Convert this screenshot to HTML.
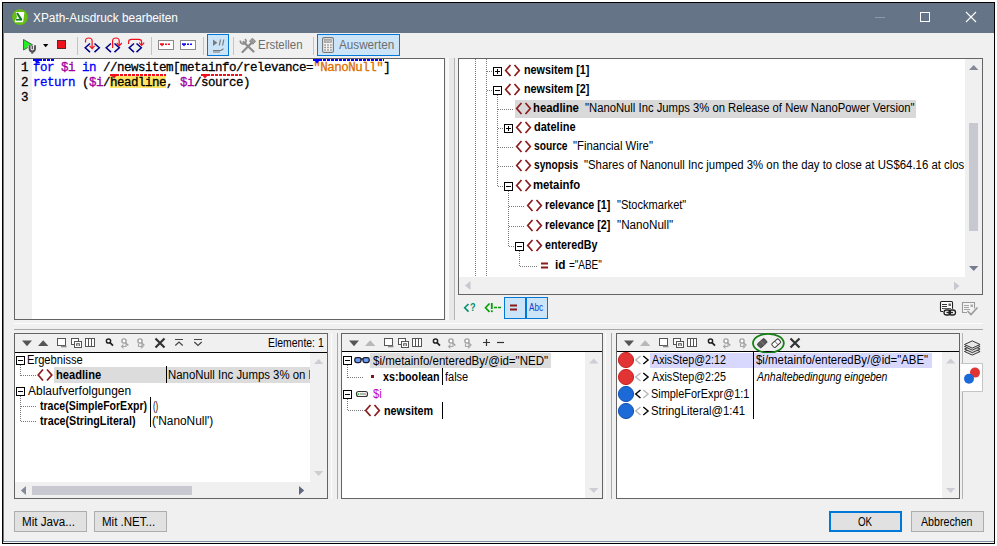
<!DOCTYPE html>
<html><head><meta charset="utf-8"><title>XPath-Ausdruck bearbeiten</title>
<style>
*{box-sizing:border-box;margin:0;padding:0}
html,body{width:997px;height:546px;background:#fff;overflow:hidden}
body{font-family:"Liberation Sans",sans-serif;font-size:12px;color:#000;position:relative}
.a{position:absolute}
.t{position:absolute;white-space:nowrap;line-height:14px;height:14px}
.b{font-weight:bold}
.i{font-style:italic}
.t{transform-origin:0 50%}
#win{left:2px;top:2px;width:993px;height:542px;background:#f0f0f0;border:1px solid #000}
#title{left:3px;top:3px;width:991px;height:30px;background:#667488}
.box{position:absolute;background:#fff;border:1px solid #646464}
.sep{position:absolute;width:1px;background:#c4c4c4;top:37px;height:18px}
.mono{-webkit-text-stroke:0.3px;font-family:"Liberation Mono",monospace;font-size:12.5px;letter-spacing:-0.5px;white-space:pre;position:absolute;line-height:15px;height:15px}
.btn{position:absolute;background:#e1e1e1;border:1px solid #adadad;text-align:center;line-height:19px;height:21px}
svg{position:absolute;overflow:visible}
</style></head><body>
<div id="win" class="a"></div>
<div id="title" class="a"></div>
<!--TITLE-->
<svg class="a" style="left:12px;top:9px" width="16" height="16" viewBox="0 0 16 16"><circle cx="8" cy="8.100" r="7.900" fill="#64c00c"/><path d="M3.700 3h8q.8 0 .6 1l-1 8q-.2 1.200-1.200 1.200H3.400q-.8 0-.5-1l.6-1.800 1.600-2.400z" fill="#fff"/><path d="M5 4l4.300 6.600" stroke="#0a7a1a" stroke-width="2" fill="none"/><path d="M3.900 10.700h6.200" stroke="#0a7a1a" stroke-width="1.700" fill="none"/></svg>
<div class="a" style="left:875px;top:17px;width:10px;height:1px;background:#8e99a9"></div>
<div class="a" style="left:920px;top:12px;width:10px;height:10px;border:1px solid #fff"></div>
<svg class="a" style="left:966px;top:12px" width="10" height="10" viewBox="0 0 10 10"><path d="M0 0L10 10M10 0L0 10" stroke="#fff" stroke-width="1.1" fill="none"/></svg>
<!--TOOLBAR-->
<svg style="left:0;top:0" width="420" height="60" viewBox="0 0 420 60">
<!-- run -->
<path d="M23.500 39.500v10.500l9-5.250z" fill="#22ee22" stroke="#4a6a4a" stroke-width="1"/>
<path d="M29.600 45.500v3.200a2.700 2.700 0 0 0 5.400 0v-3.200" fill="none" stroke="#f0f0f0" stroke-width="3.600"/><path d="M29.600 45.300v3.400a2.700 2.700 0 0 0 5.400 0v-3.400" fill="none" stroke="#505050" stroke-width="1.900"/><path d="M32.300 51v2.600" stroke="#505050" stroke-width="2.200"/><path d="M32.300 45.800v3.400" stroke="#505050" stroke-width="1.300"/>
<path d="M43 44h5.4l-2.7 3.2z" fill="#000"/>
<rect x="57.5" y="40.5" width="8" height="8" fill="#f0101c" stroke="#5a2a2a" stroke-width="1"/>
<!-- step into -->
<g fill="none" stroke="#000088" stroke-width="1.5"><path d="M90 43.5l-4.8 4.3 4.8 4.3"/><path d="M94.5 43.5l4.8 4.3-4.8 4.3"/></g>
<path d="M85.500 42.500v-1.500q0-3 3.300-3t3.300 3v7" fill="none" stroke="#f0101c" stroke-width="1.200"/><path d="M89.6 45.800l2.500 2.800 2.500-2.800" fill="none" stroke="#f0101c" stroke-width="1.200"/>
<!-- step out -->
<g fill="none" stroke="#000088" stroke-width="1.5"><path d="M111 43.500l-4.800 4.300 4.800 4.300"/><path d="M114.500 43.500l4.800 4.300-4.800 4.300"/></g>
<path d="M112.600 48v-7q0-3 3.300-3t3.300 3v4" fill="none" stroke="#f0101c" stroke-width="1.200"/><path d="M116.800 43l2.500 2.800 2.500-2.800" fill="none" stroke="#f0101c" stroke-width="1.200"/>
<!-- step over -->
<g fill="none" stroke="#000088" stroke-width="1.5"><path d="M134 43.500l-4.800 4.300 4.800 4.300"/><path d="M136.500 43.500l4.800 4.300-4.800 4.300"/></g>
<path d="M128.600 44v-2q0-2.600 3-2.600h7q3 0 3 2.600v3" fill="none" stroke="#f0101c" stroke-width="1.200"/><path d="M139 42.600l2.600 2.800 2.600-2.800" fill="none" stroke="#f0101c" stroke-width="1.200"/>
<!-- breakpoints -->
<rect x="158.500" y="40.500" width="15" height="9" fill="#fff" stroke="#8c8c8c"/>
<path d="M159.800 43.600h4.400l-2.200 3z" fill="#f0101c"/><path d="M160 44.300h11" stroke="#f0101c" stroke-width="1.400" stroke-dasharray="4 1 2 1 2 1"/>
<rect x="180.500" y="40.500" width="15" height="9" fill="#fff" stroke="#8c8c8c"/>
<path d="M181.800 43.600h4.400l-2.200 3z" fill="#1010f0"/><path d="M182 44.300h11" stroke="#1010f0" stroke-width="1.400" stroke-dasharray="4 1 2 1 2 1"/>
<!-- toggle btn -->
<rect x="207.500" y="34.500" width="21" height="21" fill="#cce4f7" stroke="#0078d7"/>
<path d="M213 39.500v6.500l4.400-3.250z" fill="#7a7a7a"/><path d="M220.500 39.500l-1.200 6M223.800 39.500l-1.200 6" stroke="#7a7a7a" stroke-width="1.200"/>
<path d="M213 50.500h8l2.500-1.800" fill="none" stroke="#7a7a7a" stroke-width="1.200"/><path d="M213 52h7" stroke="#7a7a7a" stroke-width="1"/>
<!-- tools -->
<g stroke="#8a8a8a" stroke-width="2.200" fill="none" stroke-linecap="round"><path d="M243.500 42l10 9.500"/><path d="M252 42.500l-9.500 9.500"/></g>
<path d="M240.500 40.500a2.800 2.800 0 1 0 4.500 -1.500" fill="none" stroke="#8a8a8a" stroke-width="1.600"/>
<path d="M249.500 41l3-2.800 3.200 3.200-3 2.800z" fill="#9a9a9a" stroke="#7a7a7a" stroke-width=".8"/>
<!-- eval btn -->
<rect x="317.500" y="34.500" width="82" height="21" fill="#cce4f7" stroke="#0078d7"/>
<rect x="322.600" y="37.600" width="10.800" height="14.800" rx="1.500" fill="#f4f4f4" stroke="#7a7a7a" stroke-width="1.200"/>
<rect x="324.500" y="39.500" width="7" height="3" fill="#b8b8b8" stroke="#8a8a8a" stroke-width=".6"/>
<g fill="#8a8a8a"><rect x="324.300" y="44.300" width="1.600" height="1.400"/><rect x="327.200" y="44.300" width="1.600" height="1.400"/><rect x="330.100" y="44.300" width="1.600" height="1.400"/><rect x="324.300" y="46.800" width="1.600" height="1.400"/><rect x="327.200" y="46.800" width="1.600" height="1.400"/><rect x="330.100" y="46.800" width="1.600" height="1.400"/><rect x="324.300" y="49.300" width="1.600" height="1.400"/><rect x="327.200" y="49.300" width="1.600" height="1.400"/><rect x="330.100" y="49.300" width="1.600" height="1.400"/></g>
</svg>
<div class="sep" style="left:77px"></div><div class="sep" style="left:151px"></div><div class="sep" style="left:203px"></div><div class="sep" style="left:233px"></div><div class="sep" style="left:313px"></div>
<!--EDITOR-->
<div class="box" style="left:14px;top:58px;width:431px;height:262px"></div>
<div class="a" style="left:15px;top:59px;width:17px;height:260px;background:#f0f0f0"></div>
<div class="a" style="left:110px;top:76px;width:56px;height:12px;background:#ffe566"></div>
<div class="mono" style="left:21px;top:61px">1</div><div class="mono" style="left:33px;top:61px"><span style="color:#0000ff">for</span> <span style="color:#a000a0">$i</span> <span style="color:#0000ff">in</span> //newsitem[metainfo/relevance=<span style="color:#dc7000">"NanoNull"</span>]</div>
<div class="mono" style="left:21px;top:76px">2</div><div class="mono" style="left:33px;top:76px"><span style="color:#0000ff">return</span> (<span style="color:#a000a0">$i</span>/headline, <span style="color:#a000a0">$i</span>/source)</div>
<div class="mono" style="left:21px;top:91px">3</div>
<svg style="left:0;top:0" width="450" height="100" viewBox="0 0 450 100">
<path d="M33 59h8l-4 4.500z" fill="#0000ff"/><path d="M33 60h22" stroke="#0000ff" stroke-width="2" shape-rendering="crispEdges" stroke-dasharray="9 1 3 1 3 1 3 1"/>
<path d="M313 59h8l-4 4.500z" fill="#0000ff"/><path d="M313 60h71" stroke="#0000ff" stroke-width="2" shape-rendering="crispEdges" stroke-dasharray="9 1 3 1 3 1 3 1 3 1 3 1 3 1 3 1 3 1 3 1 3 1 3 1 3 1 3 1 3 1 3 1"/>
<path d="M110 74h8l-4 4.500z" fill="#f0101c"/><path d="M110 75h56" stroke="#f0101c" stroke-width="2" shape-rendering="crispEdges" stroke-dasharray="9 1 3 1 3 1 3 1 3 1 3 1 3 1 3 1 3 1 3 1 3 1 3 1 3 1 3 1"/>
<path d="M201 74h8l-4 4.500z" fill="#f0101c"/><path d="M201 75h42" stroke="#f0101c" stroke-width="2" shape-rendering="crispEdges" stroke-dasharray="9 1 3 1 3 1 3 1 3 1 3 1 3 1 3 1 3 1 3 1 3 1"/>
</svg>
<!-- splitter -->
<div class="a" style="left:446px;top:58px;width:3px;height:262px;background:#f8f8f8"></div>
<div class="a" style="left:449px;top:58px;width:5px;height:262px;background:#e8e8e8"></div>
<div class="a" style="left:454px;top:58px;width:1px;height:262px;background:#b4b4b4"></div>
<!--GEN-->
<div class="t" style="left:33.1px;top:11.0px;color:#fff;transform:scaleX(0.9878);">XPath-Ausdruck bearbeiten</div>
<div class="t" style="left:257.6px;top:38.0px;color:#6d6d6d;transform:scaleX(0.9545);">Erstellen</div>
<div class="t" style="left:339.1px;top:38.0px;color:#6d6d6d;transform:scaleX(0.9733);">Auswerten</div>
<div class="box" style="left:458px;top:58px;width:525px;height:237px"></div>
<div class="a" style="left:515px;top:100px;width:401px;height:18px;background:#d9d9d9"></div>
<div class="a" style="left:965px;top:59px;width:17px;height:235px;background:#f0f0f0"></div>
<div class="a" style="left:459px;top:277px;width:506px;height:17px;background:#f0f0f0"></div>
<div class="a" style="left:969px;top:123px;width:9px;height:108px;background:#c8c8d0"></div>
<svg style="left:0;top:0" width="997" height="300" viewBox="0 0 997 300"><g fill="none" stroke="#7a7a7a" stroke-width="1" stroke-dasharray="1 1" shape-rendering="crispEdges"><path d="M475.5 59V277"/><path d="M486.5 59V277"/><path d="M497.5 95V186"/><path d="M508.5 191V246"/><path d="M519.5 251V266"/><path d="M487 71.5H493"/><path d="M487 90.5H493"/><path d="M498 109.5H514"/><path d="M498 128.5H504"/><path d="M498 147.5H514"/><path d="M498 166.5H514"/><path d="M498 186.5H504"/><path d="M509 206.5H525"/><path d="M509 226.5H525"/><path d="M509 246.5H515"/><path d="M520 266.5H537"/></g><g shape-rendering="crispEdges"><rect x="493.5" y="67.5" width="8" height="8" fill="#fff" stroke="#000"/><path d="M495 71.5h5" stroke="#000"/><path d="M497.5 69v5" stroke="#000"/><rect x="493.5" y="86.5" width="8" height="8" fill="#fff" stroke="#000"/><path d="M495 90.5h5" stroke="#000"/><rect x="504.5" y="124.5" width="8" height="8" fill="#fff" stroke="#000"/><path d="M506 128.5h5" stroke="#000"/><path d="M508.5 126v5" stroke="#000"/><rect x="504.5" y="182.5" width="8" height="8" fill="#fff" stroke="#000"/><path d="M506 186.5h5" stroke="#000"/><rect x="515.5" y="242.5" width="8" height="8" fill="#fff" stroke="#000"/><path d="M517 246.5h5" stroke="#000"/></g><path d="M510.5 65.0l-4.8 5.5 4.8 5.5" fill="none" stroke="#8b1a1a" stroke-width="1.7"/><path d="M514.5 65.0l4.800 5.500-4.800 5.500" fill="none" stroke="#8b1a1a" stroke-width="1.7"/><path d="M510.5 84.0l-4.8 5.5 4.8 5.5" fill="none" stroke="#8b1a1a" stroke-width="1.7"/><path d="M514.5 84.0l4.800 5.500-4.800 5.500" fill="none" stroke="#8b1a1a" stroke-width="1.7"/><path d="M521.5 103.0l-4.8 5.5 4.8 5.5" fill="none" stroke="#8b1a1a" stroke-width="1.7"/><path d="M525.5 103.0l4.800 5.500-4.800 5.500" fill="none" stroke="#8b1a1a" stroke-width="1.7"/><path d="M521.5 122.0l-4.8 5.5 4.8 5.5" fill="none" stroke="#8b1a1a" stroke-width="1.7"/><path d="M525.5 122.0l4.800 5.500-4.800 5.500" fill="none" stroke="#8b1a1a" stroke-width="1.7"/><path d="M521.5 141.0l-4.8 5.5 4.8 5.5" fill="none" stroke="#8b1a1a" stroke-width="1.7"/><path d="M525.5 141.0l4.800 5.500-4.800 5.500" fill="none" stroke="#8b1a1a" stroke-width="1.7"/><path d="M521.5 160.0l-4.8 5.5 4.8 5.5" fill="none" stroke="#8b1a1a" stroke-width="1.7"/><path d="M525.5 160.0l4.800 5.500-4.800 5.500" fill="none" stroke="#8b1a1a" stroke-width="1.7"/><path d="M521.5 180.0l-4.8 5.5 4.8 5.5" fill="none" stroke="#8b1a1a" stroke-width="1.7"/><path d="M525.5 180.0l4.800 5.500-4.800 5.500" fill="none" stroke="#8b1a1a" stroke-width="1.7"/><path d="M532.5 200.0l-4.8 5.5 4.8 5.5" fill="none" stroke="#8b1a1a" stroke-width="1.7"/><path d="M536.5 200.0l4.800 5.500-4.800 5.500" fill="none" stroke="#8b1a1a" stroke-width="1.7"/><path d="M532.5 220.0l-4.8 5.5 4.8 5.5" fill="none" stroke="#8b1a1a" stroke-width="1.7"/><path d="M536.5 220.0l4.800 5.500-4.800 5.500" fill="none" stroke="#8b1a1a" stroke-width="1.7"/><path d="M532.5 240.0l-4.8 5.5 4.8 5.5" fill="none" stroke="#8b1a1a" stroke-width="1.7"/><path d="M536.5 240.0l4.800 5.500-4.800 5.500" fill="none" stroke="#8b1a1a" stroke-width="1.7"/><path d="M541 263.500h7M541 267.500h7" stroke="#8b1a1a" stroke-width="2"/><path d="M969 70l4.700-5 4.700 5z" fill="#868999"/><path d="M969 266l4.700 5 4.700-5z" fill="#787c90"/><path d="M470.500 281v9l-5.500-4.500z" fill="#c8c8d0"/><path d="M954 281.500v9l5.500-4.500z" fill="#c8c8d0"/></svg>
<div class="t b" style="left:523.6px;top:63.0px;transform:scaleX(0.9001);">newsitem [1]</div>
<div class="t b" style="left:523.6px;top:82.0px;transform:scaleX(0.9001);">newsitem [2]</div>
<div class="t b" style="left:533.1px;top:101.0px;transform:scaleX(0.9419);">headline</div>
<div class="t" style="left:585.1px;top:101.0px;transform:scaleX(0.9394);">"NanoNull Inc Jumps 3% on Release of New NanoPower Version"</div>
<div class="t b" style="left:534.1px;top:120.0px;transform:scaleX(0.9157);">dateline</div>
<div class="t b" style="left:534.1px;top:139.0px;transform:scaleX(0.8515);">source</div>
<div class="t" style="left:573.1px;top:139.0px;transform:scaleX(0.9453);">"Financial Wire"</div>
<div class="t b" style="left:534.1px;top:158.0px;transform:scaleX(0.8475);">synopsis</div>
<div class="a" style="left:584px;top:158.0px;width:381px;height:16px;overflow:hidden"><div class="t" style="left:0.1px;top:0;transform:scaleX(0.9479);">"Shares of Nanonull Inc jumped 3% on the day to close at US$64.16 at clos</div></div>
<div class="t b" style="left:533.1px;top:178.0px;transform:scaleX(0.9430);">metainfo</div>
<div class="t b" style="left:545.1px;top:198.0px;transform:scaleX(0.8905);">relevance [1]</div>
<div class="t" style="left:616.6px;top:198.0px;transform:scaleX(0.9214);">"Stockmarket"</div>
<div class="t b" style="left:545.1px;top:218.0px;transform:scaleX(0.8905);">relevance [2]</div>
<div class="t" style="left:616.6px;top:218.0px;transform:scaleX(0.9707);">"NanoNull"</div>
<div class="t b" style="left:545.1px;top:238.0px;transform:scaleX(0.8950);">enteredBy</div>
<div class="t b" style="left:554.6px;top:258.0px;transform:scaleX(0.9816);">id</div>
<div class="t" style="left:569.1px;top:258.0px;transform:scaleX(0.8288);">="ABE"</div>
<svg style="left:0;top:0" width="997" height="335" viewBox="0 0 997 335"><rect x="504.500" y="297.500" width="21" height="21" fill="#cce4f7" stroke="#0078d7"/><rect x="526.500" y="297.500" width="21" height="21" fill="#cce4f7" stroke="#0078d7"/><path d="M510 305.500h7M510 309.500h7" stroke="#8b1a1a" stroke-width="2"/><path d="M468.500 304l-3.800 3.800 3.800 3.800" fill="none" stroke="#009070" stroke-width="1.600"/><path d="M489.500 303.500l-4 4.200 4 4.200" fill="none" stroke="#00a000" stroke-width="1.600"/><path d="M491.800 303v6" stroke="#00a000" stroke-width="1.800"/><rect x="490.900" y="310.300" width="1.800" height="1.800" fill="#00a000"/><path d="M494 307.500h3M498 307.500h3" stroke="#00a000" stroke-width="1.400"/><g fill="none" stroke="#222" stroke-width="1.100"><rect x="940.500" y="301.500" width="12" height="10" rx="1" fill="#fff"/><path d="M942 304.500h5M942 306.500h5M942 308.500h9" stroke-width=".9"/><rect x="948.500" y="303.500" width="2.500" height="2.500" fill="#666" stroke="none"/><rect x="943" y="308.800" width="13" height="7.200" fill="#f0f0f0" stroke="none"/><rect x="944" y="310" width="6.500" height="5" rx="2.500" stroke-width="1.300"/><rect x="949" y="310" width="6.500" height="5" rx="2.500" stroke-width="1.300"/><path d="M946.500 312.500h6.500" stroke-width="1.300"/></g><g fill="none" stroke="#9a9a9a" stroke-width="1.100"><path d="M967 312.500h-4.500v-10h12v6" fill="#f4f4f4"/><path d="M964 305.500h5M964 307.500h5M964 309.500h6" stroke-width=".9"/><rect x="970.500" y="304.500" width="2.500" height="2.500" fill="#aaa" stroke="none"/><path d="M967.500 311l3.500 3.500 6.500-7" stroke-width="1.600"/></g></svg>
<div class="t b" style="left:469.6px;top:299.5px;color:#009070;font-size:11px;transform:scaleX(0.8333);">?</div>
<div class="t" style="left:529.1px;top:299.5px;color:#1040d0;font-size:11.5px;transform:scaleX(0.7057);">Abc</div>
<div class="a" style="left:14px;top:323px;width:969px;height:1px;background:#fcfcfc"></div>
<div class="a" style="left:14px;top:329px;width:969px;height:1px;background:#a8a8a8"></div>
<div class="box" style="left:14px;top:333px;width:314px;height:166px"></div>
<div class="a" style="left:15px;top:334px;width:312px;height:18px;background:#f0f0f0"></div>
<div class="a" style="left:15px;top:352px;width:312px;height:1px;background:#000"></div>
<div class="a" style="left:310px;top:353px;width:17px;height:145px;background:#f0f0f0"></div>
<div class="a" style="left:15px;top:482px;width:312px;height:16px;background:#f0f0f0"></div>
<div class="box" style="left:341px;top:333px;width:262px;height:166px"></div>
<div class="a" style="left:342px;top:334px;width:260px;height:17px;background:#f0f0f0"></div>
<div class="a" style="left:342px;top:351px;width:260px;height:1px;background:#000"></div>
<div class="a" style="left:585px;top:352px;width:17px;height:146px;background:#f0f0f0"></div>
<div class="box" style="left:616px;top:333px;width:344px;height:166px"></div>
<div class="a" style="left:617px;top:334px;width:342px;height:17px;background:#f0f0f0"></div>
<div class="a" style="left:617px;top:351px;width:342px;height:1px;background:#000"></div>
<div class="a" style="left:942px;top:352px;width:17px;height:146px;background:#f0f0f0"></div>
<div class="a" style="left:331px;top:333px;width:1px;height:166px;background:#fcfcfc"></div>
<div class="a" style="left:337px;top:333px;width:1px;height:166px;background:#a8a8a8"></div>
<div class="a" style="left:605px;top:333px;width:1px;height:166px;background:#fcfcfc"></div>
<div class="a" style="left:611px;top:333px;width:1px;height:166px;background:#a8a8a8"></div>
<svg style="left:0;top:0" width="997" height="546" viewBox="0 0 997 546"><path d="M22 340.500h10l-5 5.700z" fill="#555"/><path d="M38 346h10.400l-5.200-5.800z" fill="#555"/><rect x="57.5" y="338.500" width="8" height="7" fill="#fff" stroke="#555"/><path d="M61 346.500h5.500" stroke="#888" stroke-width="1.600"/><rect x="71.5" y="338.500" width="7" height="6" fill="#fff" stroke="#555"/><rect x="74.5" y="341.500" width="7" height="6" fill="#fff" stroke="#555"/><path d="M76.5 346v-2.500h3v2.500M76.5 345h3" fill="none" stroke="#555" stroke-width=".8"/><rect x="85.5" y="338.500" width="9" height="8" fill="#fff" stroke="#555"/><path d="M88.5 339v8M91.5 339v8" stroke="#555"/><circle cx="108.5" cy="341" r="2.100" fill="#fff" stroke="#222" stroke-width="1.500"/><path d="M110 342.700l3 3" stroke="#222" stroke-width="1.800"/><circle cx="124.0" cy="341" r="2.100" fill="#fff" stroke="#a0a0a0" stroke-width="1.400"/><path d="M125.5 342.700l2.800 2.800" stroke="#a0a0a0" stroke-width="1.600"/><circle cx="140.0" cy="341" r="2.100" fill="#fff" stroke="#a0a0a0" stroke-width="1.400"/><path d="M141.5 342.700l2.800 2.800" stroke="#a0a0a0" stroke-width="1.600"/><path d="M126 343.500v3h-4.500m2-1.800l-2 1.800 2 1.800" fill="none" stroke="#a8a8a8" stroke-width="1.100"/><path d="M138.5 343.500v3h4.500m-2-1.800l2 1.800-2 1.800" fill="none" stroke="#a8a8a8" stroke-width="1.100"/><path d="M349 340.500h10l-5 5.700z" fill="#555"/><path d="M365 346h10.400l-5.200-5.800z" fill="#b8b8b8"/><rect x="384.5" y="338.500" width="8" height="7" fill="#fff" stroke="#555"/><path d="M388 346.500h5.500" stroke="#888" stroke-width="1.600"/><rect x="398.5" y="338.500" width="7" height="6" fill="#fff" stroke="#555"/><rect x="401.5" y="341.500" width="7" height="6" fill="#fff" stroke="#555"/><path d="M403.5 346v-2.500h3v2.500M403.5 345h3" fill="none" stroke="#555" stroke-width=".8"/><rect x="412.5" y="338.500" width="9" height="8" fill="#fff" stroke="#555"/><path d="M415.5 339v8M418.5 339v8" stroke="#555"/><circle cx="435.5" cy="341" r="2.100" fill="#fff" stroke="#222" stroke-width="1.500"/><path d="M437 342.700l3 3" stroke="#222" stroke-width="1.800"/><circle cx="451.0" cy="341" r="2.100" fill="#fff" stroke="#a0a0a0" stroke-width="1.400"/><path d="M452.5 342.700l2.800 2.800" stroke="#a0a0a0" stroke-width="1.600"/><circle cx="467.0" cy="341" r="2.100" fill="#fff" stroke="#a0a0a0" stroke-width="1.400"/><path d="M468.5 342.700l2.800 2.800" stroke="#a0a0a0" stroke-width="1.600"/><path d="M453 343.500v3h-4.500m2-1.800l-2 1.800 2 1.800" fill="none" stroke="#a8a8a8" stroke-width="1.100"/><path d="M465.5 343.500v3h4.500m-2-1.800l2 1.800-2 1.800" fill="none" stroke="#a8a8a8" stroke-width="1.100"/><path d="M624 340.500h10l-5 5.700z" fill="#555"/><path d="M640 346h10.400l-5.200-5.800z" fill="#b8b8b8"/><rect x="659.5" y="338.500" width="8" height="7" fill="#fff" stroke="#555"/><path d="M663 346.500h5.500" stroke="#888" stroke-width="1.600"/><rect x="673.5" y="338.500" width="7" height="6" fill="#fff" stroke="#555"/><rect x="676.5" y="341.500" width="7" height="6" fill="#fff" stroke="#555"/><path d="M678.5 346v-2.500h3v2.500M678.5 345h3" fill="none" stroke="#555" stroke-width=".8"/><rect x="687.5" y="338.500" width="9" height="8" fill="#fff" stroke="#555"/><path d="M690.5 339v8M693.5 339v8" stroke="#555"/><circle cx="710.5" cy="341" r="2.100" fill="#fff" stroke="#222" stroke-width="1.500"/><path d="M712 342.700l3 3" stroke="#222" stroke-width="1.800"/><circle cx="726.0" cy="341" r="2.100" fill="#fff" stroke="#a0a0a0" stroke-width="1.400"/><path d="M727.5 342.700l2.800 2.800" stroke="#a0a0a0" stroke-width="1.600"/><circle cx="742.0" cy="341" r="2.100" fill="#fff" stroke="#a0a0a0" stroke-width="1.400"/><path d="M743.5 342.700l2.800 2.800" stroke="#a0a0a0" stroke-width="1.600"/><path d="M728 343.500v3h-4.500m2-1.800l-2 1.800 2 1.800" fill="none" stroke="#a8a8a8" stroke-width="1.100"/><path d="M740.5 343.500v3h4.500m-2-1.800l2 1.800-2 1.800" fill="none" stroke="#a8a8a8" stroke-width="1.100"/><path d="M155.500 338.500l9 9M164.500 338.500l-9 9" stroke="#333" stroke-width="2.200"/><path d="M175 339.500h8M175.300 345.500l3.700-3.500 3.700 3.500" fill="none" stroke="#444" stroke-width="1.200"/><path d="M194 339.500h8M194.300 342l3.700 3.500 3.700-3.500" fill="none" stroke="#444" stroke-width="1.200"/><path d="M483 342.500h7M486.500 339v7" stroke="#333" stroke-width="1.200"/><path d="M497 342.500h7" stroke="#333" stroke-width="1.200"/><ellipse cx="768.400" cy="343.300" rx="15.400" ry="9.500" fill="none" stroke="#158015" stroke-width="1.800"/><rect x="-4.600" y="-2.700" width="9.200" height="5.400" rx="1.300" transform="translate(762.200,343.200) rotate(-42)" fill="#5a5a5a" stroke="#3a3a3a" stroke-width=".9"/><path d="M760.600 340.900l3.600 3.900" stroke="#888" stroke-width=".8"/><rect x="-4.400" y="-2.500" width="8.800" height="5" rx="1.300" transform="translate(776.200,343.200) rotate(-42)" fill="#fff" stroke="#3a3a3a" stroke-width="1"/><path d="M774.800 341.200l3.300 3.600" stroke="#3a3a3a" stroke-width=".8"/><path d="M790.500 338.500l9 9M799.500 338.500l-9 9" stroke="#333" stroke-width="2.200"/></svg>
<div class="t" style="left:267.6px;top:335.5px;transform:scaleX(0.8699);">Elemente: 1</div>
<div class="a" style="left:54px;top:367px;width:256px;height:16px;background:#dcdcdc"></div>
<div class="a" style="left:166px;top:366px;width:1px;height:17px;background:#000"></div>
<div class="a" style="left:150px;top:397px;width:1px;height:30px;background:#000"></div>
<div class="a" style="left:370px;top:353px;width:181px;height:15px;background:#dcdcdc"></div>
<div class="a" style="left:442px;top:368px;width:1px;height:17px;background:#000"></div>
<div class="a" style="left:442px;top:402px;width:1px;height:17px;background:#000"></div>
<div class="a" style="left:650px;top:353px;width:103px;height:15px;background:#d8d8ff"></div>
<div class="a" style="left:754px;top:353px;width:178px;height:15px;background:#d8d8ff"></div>
<div class="a" style="left:753px;top:352px;width:1px;height:67px;background:#000"></div>
<svg style="left:0;top:0" width="997" height="546" viewBox="0 0 997 546"><g fill="none" stroke="#7a7a7a" stroke-width="1" stroke-dasharray="1 1" shape-rendering="crispEdges"><path d="M20.5 365V376"/><path d="M21 375.5H37"/><path d="M20.5 396V422"/><path d="M21 406.5H37"/><path d="M21 421.5H37"/><path d="M347.5 365V378"/><path d="M348 377.5H364"/><path d="M347.5 399V411"/><path d="M348 410.5H365"/></g><g shape-rendering="crispEdges"><rect x="16.5" y="356.5" width="8" height="8" fill="#fff" stroke="#000"/><path d="M18 360.5h5" stroke="#000"/><rect x="16.5" y="387.5" width="8" height="8" fill="#fff" stroke="#000"/><path d="M18 391.5h5" stroke="#000"/><rect x="343.5" y="356.5" width="8" height="8" fill="#fff" stroke="#000"/><path d="M345 360.5h5" stroke="#000"/><rect x="343.5" y="390.5" width="8" height="8" fill="#fff" stroke="#000"/><path d="M345 394.5h5" stroke="#000"/></g><rect x="354.800" y="357.600" width="6.200" height="5" rx="1.800" fill="#6a9cf4" stroke="#1a1a2a" stroke-width="1.300"/><rect x="363" y="357.600" width="6.200" height="5" rx="1.800" fill="#6a9cf4" stroke="#1a1a2a" stroke-width="1.300"/><path d="M361 359h2" stroke="#1a1a2a" stroke-width="1.300"/><rect x="371" y="375" width="3" height="3" fill="#8b1010"/><rect x="356.500" y="391.500" width="11" height="5" rx="2" fill="#f4f4f4" stroke="#333" stroke-width="1.100"/><path d="M360 394h6" stroke="#999" stroke-width="1.400"/><rect x="357.600" y="393.300" width="1.600" height="1.600" fill="#20c020"/><circle cx="626" cy="360" r="7.600" fill="#e23434" stroke="#c22222" stroke-width="1"/><circle cx="626" cy="377" r="7.600" fill="#e23434" stroke="#c22222" stroke-width="1"/><circle cx="626" cy="394" r="7.600" fill="#1c6ad8" stroke="#1450b0" stroke-width="1"/><circle cx="626" cy="411" r="7.600" fill="#1c6ad8" stroke="#1450b0" stroke-width="1"/><path d="M43.0 369.5l-4.8 5.5 4.8 5.5" fill="none" stroke="#8b1a1a" stroke-width="1.7"/><path d="M47.0 369.5l4.800 5.500-4.800 5.500" fill="none" stroke="#8b1a1a" stroke-width="1.7"/><path d="M370.5 405.0l-4.8 5.5 4.8 5.5" fill="none" stroke="#8b1a1a" stroke-width="1.7"/><path d="M374.5 405.0l4.800 5.500-4.800 5.500" fill="none" stroke="#8b1a1a" stroke-width="1.7"/><path d="M640.5 356l-4.800 4 4.800 4" fill="none" stroke="#b8b8b8" stroke-width="1.4"/><path d="M643.3 356l4.800 4-4.800 4" fill="none" stroke="#000" stroke-width="1.4"/><path d="M640.5 373l-4.800 4 4.800 4" fill="none" stroke="#b8b8b8" stroke-width="1.4"/><path d="M643.3 373l4.800 4-4.800 4" fill="none" stroke="#000" stroke-width="1.4"/><path d="M640.5 390l-4.800 4 4.800 4" fill="none" stroke="#000" stroke-width="1.4"/><path d="M643.3 390l4.800 4-4.800 4" fill="none" stroke="#b8b8b8" stroke-width="1.4"/><path d="M640.5 407l-4.800 4 4.800 4" fill="none" stroke="#b8b8b8" stroke-width="1.4"/><path d="M643.3 407l4.800 4-4.800 4" fill="none" stroke="#000" stroke-width="1.4"/><path d="M314 364l4.700-5 4.700 5z" fill="#cdcdd4"/><path d="M314 471l4.700 5 4.700-5z" fill="#cdcdd4"/><path d="M589 363.5l4.700-5 4.700 5z" fill="#cdcdd4"/><path d="M589 488l4.700 5 4.700-5z" fill="#cdcdd4"/><path d="M946 363.5l4.700-5 4.700 5z" fill="#cdcdd4"/><path d="M946 488l4.700 5 4.700-5z" fill="#cdcdd4"/><path d="M26 486v9l-5.200-4.500z" fill="#868999"/><path d="M299 486v9l5.200-4.500z" fill="#606680"/><rect x="32" y="486" width="160" height="9" fill="#c8c8d0"/><path d="M962.500 333v30.500M962.500 392v107" stroke="#b4b4b4" fill="none"/><path d="M961 363.500h21.500v28H961" stroke="#c4c4c4" fill="#fff"/><rect x="960.500" y="364" width="2" height="27.500" fill="#fff"/><circle cx="975" cy="372.600" r="5" fill="#e23434"/><circle cx="969" cy="378.800" r="5" fill="#1c6ad8"/><g fill="#dcdcdc" stroke="#3a3a3a" stroke-width="1"><path d="M964.500 351.500l7.800-3.600 7.800 3.600-7.800 3.600z"/><path d="M964.500 349l7.800-3.600 7.800 3.600-7.800 3.600z"/><path d="M964.500 346.500l7.800-3.600 7.800 3.600-7.800 3.600z"/><path d="M964.500 344.500l7.800-3.600 7.800 3.600-7.800 3.600z" fill="#e8e8e8"/></g></svg>
<div class="t" style="left:26.6px;top:353.0px;transform:scaleX(0.9286);">Ergebnisse</div>
<div class="t b" style="left:55.6px;top:368.0px;transform:scaleX(0.9272);">headline</div>
<div class="a" style="left:168px;top:368.0px;width:142px;height:16px;overflow:hidden"><div class="t" style="left:0.1px;top:0;transform:scaleX(0.9493);">NanoNull Inc Jumps 3% on Release</div></div>
<div class="t" style="left:27.6px;top:384.0px;transform:scaleX(0.9972);">Ablaufverfolgungen</div>
<div class="t b" style="left:40.1px;top:399.0px;transform:scaleX(0.8770);">trace(SimpleForExpr)</div>
<div class="t" style="left:153.1px;top:399.0px;transform:scaleX(0.6509);">()</div>
<div class="t b" style="left:40.1px;top:414.0px;transform:scaleX(0.8890);">trace(StringLiteral)</div>
<div class="t" style="left:152.1px;top:414.0px;transform:scaleX(0.9900);">('NanoNull')</div>
<div class="t" style="left:372.6px;top:353.5px;transform:scaleX(0.9594);">$i/metainfo/enteredBy/@id="NED"</div>
<div class="t b" style="left:382.6px;top:370.0px;transform:scaleX(0.8937);">xs:boolean</div>
<div class="t" style="left:444.6px;top:370.0px;transform:scaleX(0.9166);">false</div>
<div class="t" style="left:372.6px;top:387.0px;color:#c000c0;transform:scaleX(0.9226);">$i</div>
<div class="t b" style="left:383.6px;top:403.5px;transform:scaleX(0.8963);">newsitem</div>
<div class="t" style="left:652.1px;top:353.0px;transform:scaleX(0.8916);">AxisStep@2:12</div>
<div class="t" style="left:652.1px;top:370.0px;transform:scaleX(0.8916);">AxisStep@2:25</div>
<div class="t" style="left:651.1px;top:387.0px;transform:scaleX(0.9094);">SimpleForExpr@1:1</div>
<div class="t" style="left:651.1px;top:404.0px;transform:scaleX(0.9455);">StringLiteral@1:41</div>
<div class="t" style="left:756.1px;top:353.0px;transform:scaleX(0.9503);">$i/metainfo/enteredBy/@id="ABE"</div>
<div class="t i" style="left:757.1px;top:370.0px;transform:scaleX(0.8727);">Anhaltebedingung eingeben</div>
<div class="btn" style="left:14px;top:511px;width:73px"></div>
<div class="btn" style="left:94px;top:511px;width:73px"></div>
<div class="btn" style="left:829px;top:511px;width:73px;border:2px solid #0078d7"></div>
<div class="btn" style="left:911px;top:511px;width:73px"></div>
<div class="t" style="left:22.1px;top:514.5px;transform:scaleX(0.9679);">Mit Java...</div>
<div class="t" style="left:101.6px;top:514.5px;transform:scaleX(0.9612);">Mit .NET...</div>
<div class="t" style="left:857.6px;top:514.5px;transform:scaleX(0.8130);">OK</div>
<div class="t" style="left:920.6px;top:514.5px;transform:scaleX(0.8880);">Abbrechen</div>
<div class="a" style="left:3px;top:541px;width:991px;height:1px;background:#8090a8"></div>
<div class="a" style="left:3px;top:542px;width:991px;height:1px;background:#f6f6f6"></div>
<div class="a" style="left:3px;top:33px;width:1px;height:509px;background:#6a7a90"></div>
<!--/GEN-->
</body></html>
